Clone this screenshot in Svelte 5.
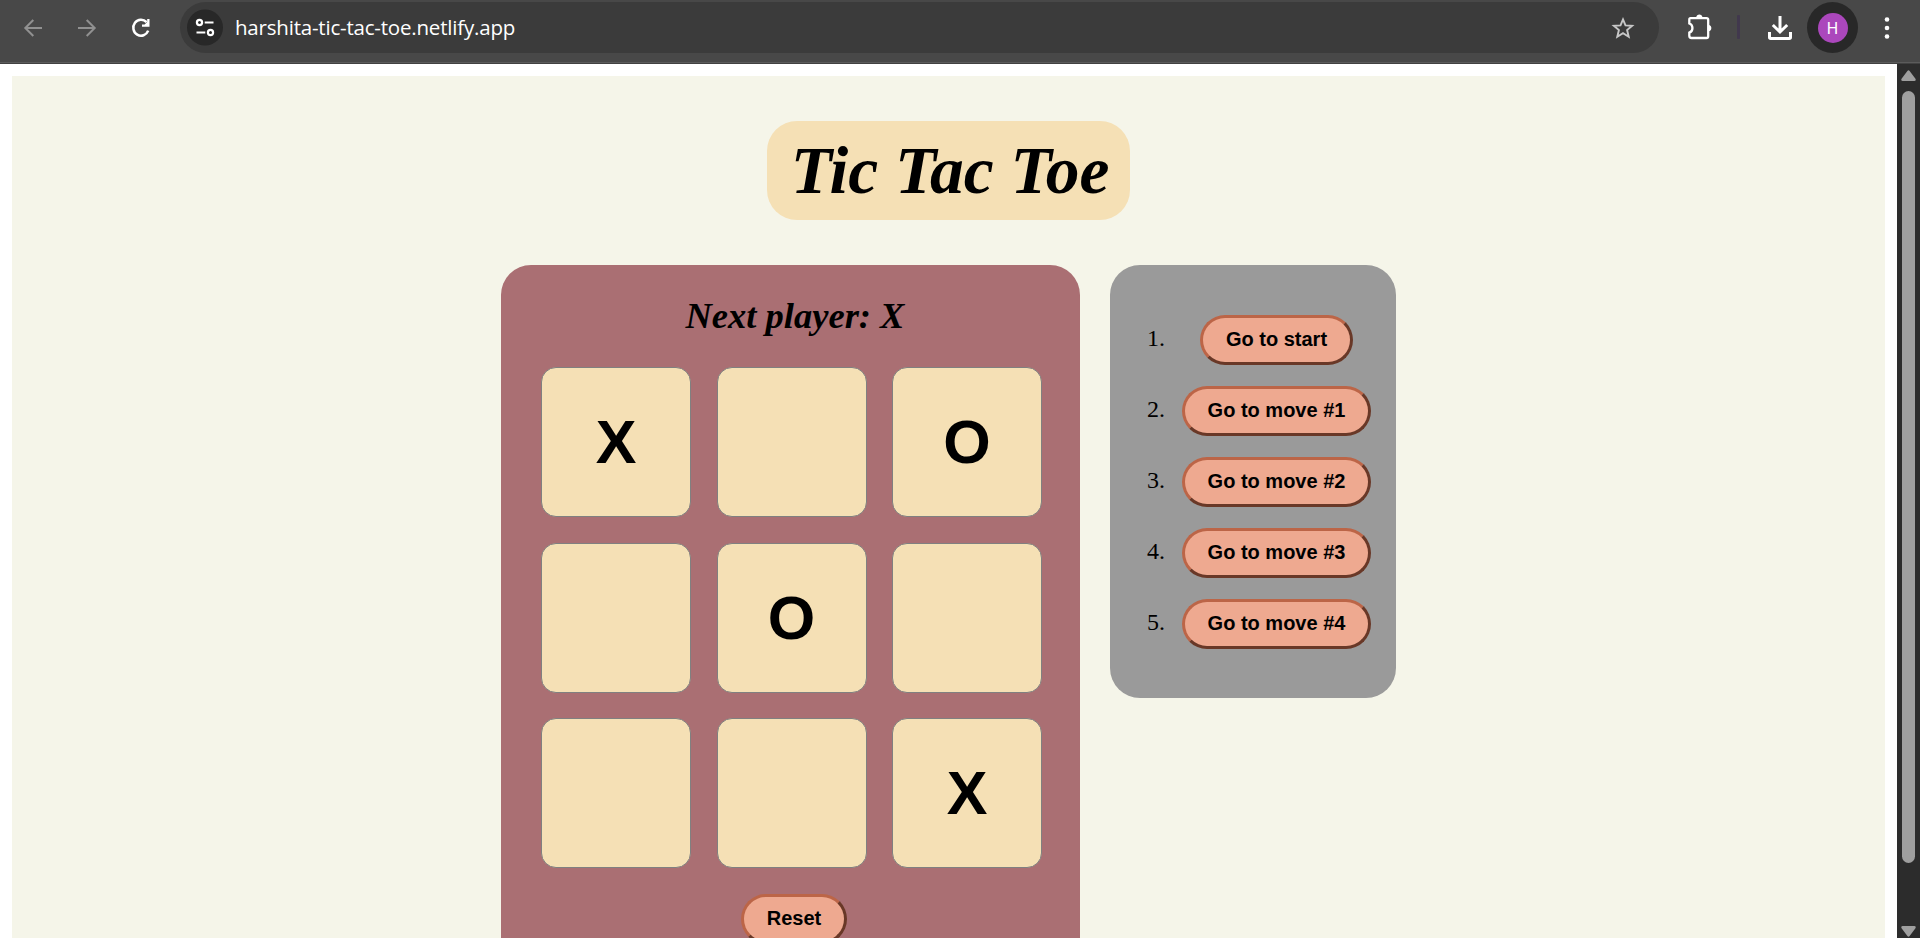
<script>
  const squares = ['X', '', 'O', '', 'O', '', '', '', 'X'];
  const moves = ['Go to start', 'Go to move #1', 'Go to move #2', 'Go to move #3', 'Go to move #4'];
</script>

<div class="window">
  <header class="toolbar">
    <div class="nav">
      <svg class="dim" width="20" height="22" viewBox="0 0 20 22"><path d="M19 11H2.500M10.300 3L2.300 11L10.300 19" /></svg>
      <svg class="dim" width="20" height="22" viewBox="0 0 20 22"><path d="M1 11H17.500M9.700 3L17.700 11L9.700 19" /></svg>
      <svg class="reload" width="20" height="22" viewBox="0 0 20 22"><path d="M15.600 5.200A7.700 8 0 1 0 17.200 13.600" /><path class="solid" d="M18.500 2V9.700H11V7.400H13.600L16.200 5V2Z" /></svg>
    </div>
    <div class="address">
      <svg class="site" width="36" height="37" viewBox="0 0 36 37">
        <circle class="disc" cx="18" cy="18.500" r="18" />
        <circle cx="12.500" cy="13.500" r="2.600" /><path d="M17.700 13.500H26.500M9.500 23.500H18.300" /><circle cx="23.500" cy="23.500" r="2.600" />
      </svg>
      <span class="url">harshita-tic-tac-toe.netlify.app</span>
      <svg class="star" width="24" height="24" viewBox="0 0 24 24"><path d="M12 3.400L14.500 9.400L21.100 9.800L16.100 14L17.700 20.800L12 17.200L6.300 20.800L7.900 14L2.900 9.800L9.500 9.400Z" /></svg>
    </div>
    <svg class="puzzle" width="26" height="28" viewBox="0 0 26 28"><path d="M3.500 5.100H19.500Q21.200 5.100 21.200 6.800V23.300Q21.200 25 19.500 25H4.500Q2.300 25 2.300 22.800V19.700C6.500 18.400 6.500 11.800 2.300 10.500V6.800Q2.300 5.100 3.500 5.100Z" /><path class="solid" d="M9.200 4.500C9.400.6 15.300.6 15.500 4.500ZM21.600 12C25.300 12.200 25.300 18 21.600 18.200Z" /></svg>
    <span class="divider"></span>
    <svg class="download" width="26" height="28" viewBox="0 0 26 28"><path d="M13 3V18M5.800 12L13 19L20.200 12M2.500 19V24.300Q2.500 25.500 3.700 25.500H22.300Q23.500 25.500 23.500 24.300V19" /></svg>
    <div class="profile"><span class="avatar">H</span></div>
    <svg class="menu" width="6" height="24" viewBox="0 0 6 24"><circle cx="3" cy="3.500" r="2.300" /><circle cx="3" cy="12" r="2.300" /><circle cx="3" cy="20.500" r="2.300" /></svg>
  </header>

  <div class="viewport">
    <main>
      <h1>Tic Tac Toe</h1>
      <div class="game">
        <section class="board">
          <h2>Next player: X</h2>
          <div class="grid">
            {#each squares as value}
              <button class="square">{value}</button>
            {/each}
          </div>
          <button class="pill reset">Reset</button>
        </section>
        <ol class="history">
          {#each moves as move, i}
            <li><span class="num">{i + 1}.</span><span class="slot"><button class="pill">{move}</button></span></li>
          {/each}
        </ol>
      </div>
    </main>
    <aside class="scrollbar">
      <svg width="15" height="11" viewBox="0 0 15 11"><path d="M6.400.9Q7.500-.5 8.600.9L14.600 9Q15 11 13.400 11H1.600Q0 11 .4 9Z" /></svg>
      <span class="thumb"></span>
      <svg class="down" width="15" height="11" viewBox="0 0 15 11"><path d="M6.400 10.100Q7.500 11.500 8.600 10.100L14.600 2Q15 0 13.400 0H1.600Q0 0 .4 2Z" /></svg>
    </aside>
  </div>
</div>

<style>
  :global(body) { margin: 0; overflow: hidden; }
  * { box-sizing: border-box; }
  .window { width: 1920px; height: 938px; display: flex; flex-direction: column; overflow: hidden; background: #fff; }
  .toolbar { height: 64px; flex: none; display: flex; align-items: center; padding: 0 0 9px 23px; background: #484848; border-bottom: 1px solid #414141; box-shadow: inset 0 -1px #5b5b5b; }
  svg { display: block; flex: none; fill: none; stroke: #fff; }
  .nav { display: flex; gap: 34px; width: 157px; flex: none; padding-top: 1px; }
  .dim { stroke: #919191; stroke-width: 2; }
  .reload { stroke-width: 2.5; }
  .solid { fill: #fff; stroke: none; }
  .address { width: 1479px; flex: none; height: 51px; margin-top: 1px; border-radius: 26px; background: #3b3b3b; display: flex; align-items: center; padding: 0 24px 0 7px; }
  .disc { fill: #282828; stroke: none; }
  .site { stroke-width: 2.200; }
  .url { flex: 1; margin-left: 12px; font: 20.500px/28px "Open Sans", sans-serif; color: #fff; letter-spacing: -.2px; padding-bottom: 1px; }
  .star { stroke: #c7c7c7; stroke-width: 1.900; }
  .puzzle { margin-left: 28px; stroke-width: 2.300; margin-top: -1px; }
  .divider { width: 3px; height: 24px; margin-left: 24px; background: #41384d; border-radius: 1px; }
  .download { margin-left: 27px; stroke-width: 3; }
  .profile { width: 51px; height: 51px; margin: 1px 0 0 14px; border-radius: 50%; background: #282828; display: flex; align-items: center; justify-content: center; flex: none; }
  .avatar { width: 30px; height: 30px; border-radius: 50%; background: #ab47bc; color: #fff; font: 16px/31px Roboto, sans-serif; text-align: center; }
  .menu { margin: 1px 0 0 26px; fill: #fff; stroke: none; }
  .viewport { display: flex; flex: 1; min-height: 0; }
  main { flex: 1; height: 1000px; margin: 12px 12px 0; padding-top: 45px; background: #f5f5e9; display: flex; flex-direction: column; align-items: center; }
  h1 { margin: 0; width: 363px; height: 99px; border-radius: 30px; background: #f5e0b5; font: italic bold 67.500px/78px "Liberation Serif", serif; padding: 11px 0 0 3px; text-align: center; white-space: nowrap; }
  .game { display: flex; align-items: flex-start; gap: 30px; margin-top: 45px; }
  .board { width: 579px; height: 720px; padding-top: 30px; border-radius: 30px; background: #aa6f73; display: flex; flex-direction: column; align-items: center; }
  h2 { margin: 0; padding-left: 9px; font: italic bold 36.500px/42px "Liberation Serif", serif; }
  .grid { display: grid; grid-template-columns: repeat(3, 150px); grid-auto-rows: 150px; gap: 25.500px; margin: 30px 0 26px 2px; }
  .square { padding: 0; border: 1px solid #808080; border-radius: 15px; background: #f5e0b5; color: #000; font: bold 61px/60px "Liberation Sans", sans-serif; }
  .pill { height: 50px; padding: 0 22.500px 1px; border: 3px solid; border-color: #bc6547 #693827 #693827 #bc6547; border-radius: 30px; background: #eea990; color: #000; font: bold 20px/23px "Liberation Sans", sans-serif; white-space: nowrap; }
  .reset { margin-left: 7px; }
  .history { width: 286px; height: 433px; margin: 0; padding: 50px 25px 0 37px; border-radius: 30px; background: #9a9a9a; list-style: none; font: 24px/27px "Liberation Serif", serif; }
  .history li { display: flex; align-items: center; margin-bottom: 21px; }
  .num { width: 35px; padding-bottom: 3px; }
  .slot { flex: 1; display: flex; justify-content: center; }
  .scrollbar { width: 23px; background: #2c2c2c; display: flex; flex-direction: column; align-items: center; padding: 6px 0 1px; }
  .scrollbar svg { fill: #9f9f9f; stroke: none; }
  .thumb { width: 13px; height: 772px; margin-top: 10px; border-radius: 7px; background: #9f9f9f; }
  .down { margin-top: auto; }
</style>
